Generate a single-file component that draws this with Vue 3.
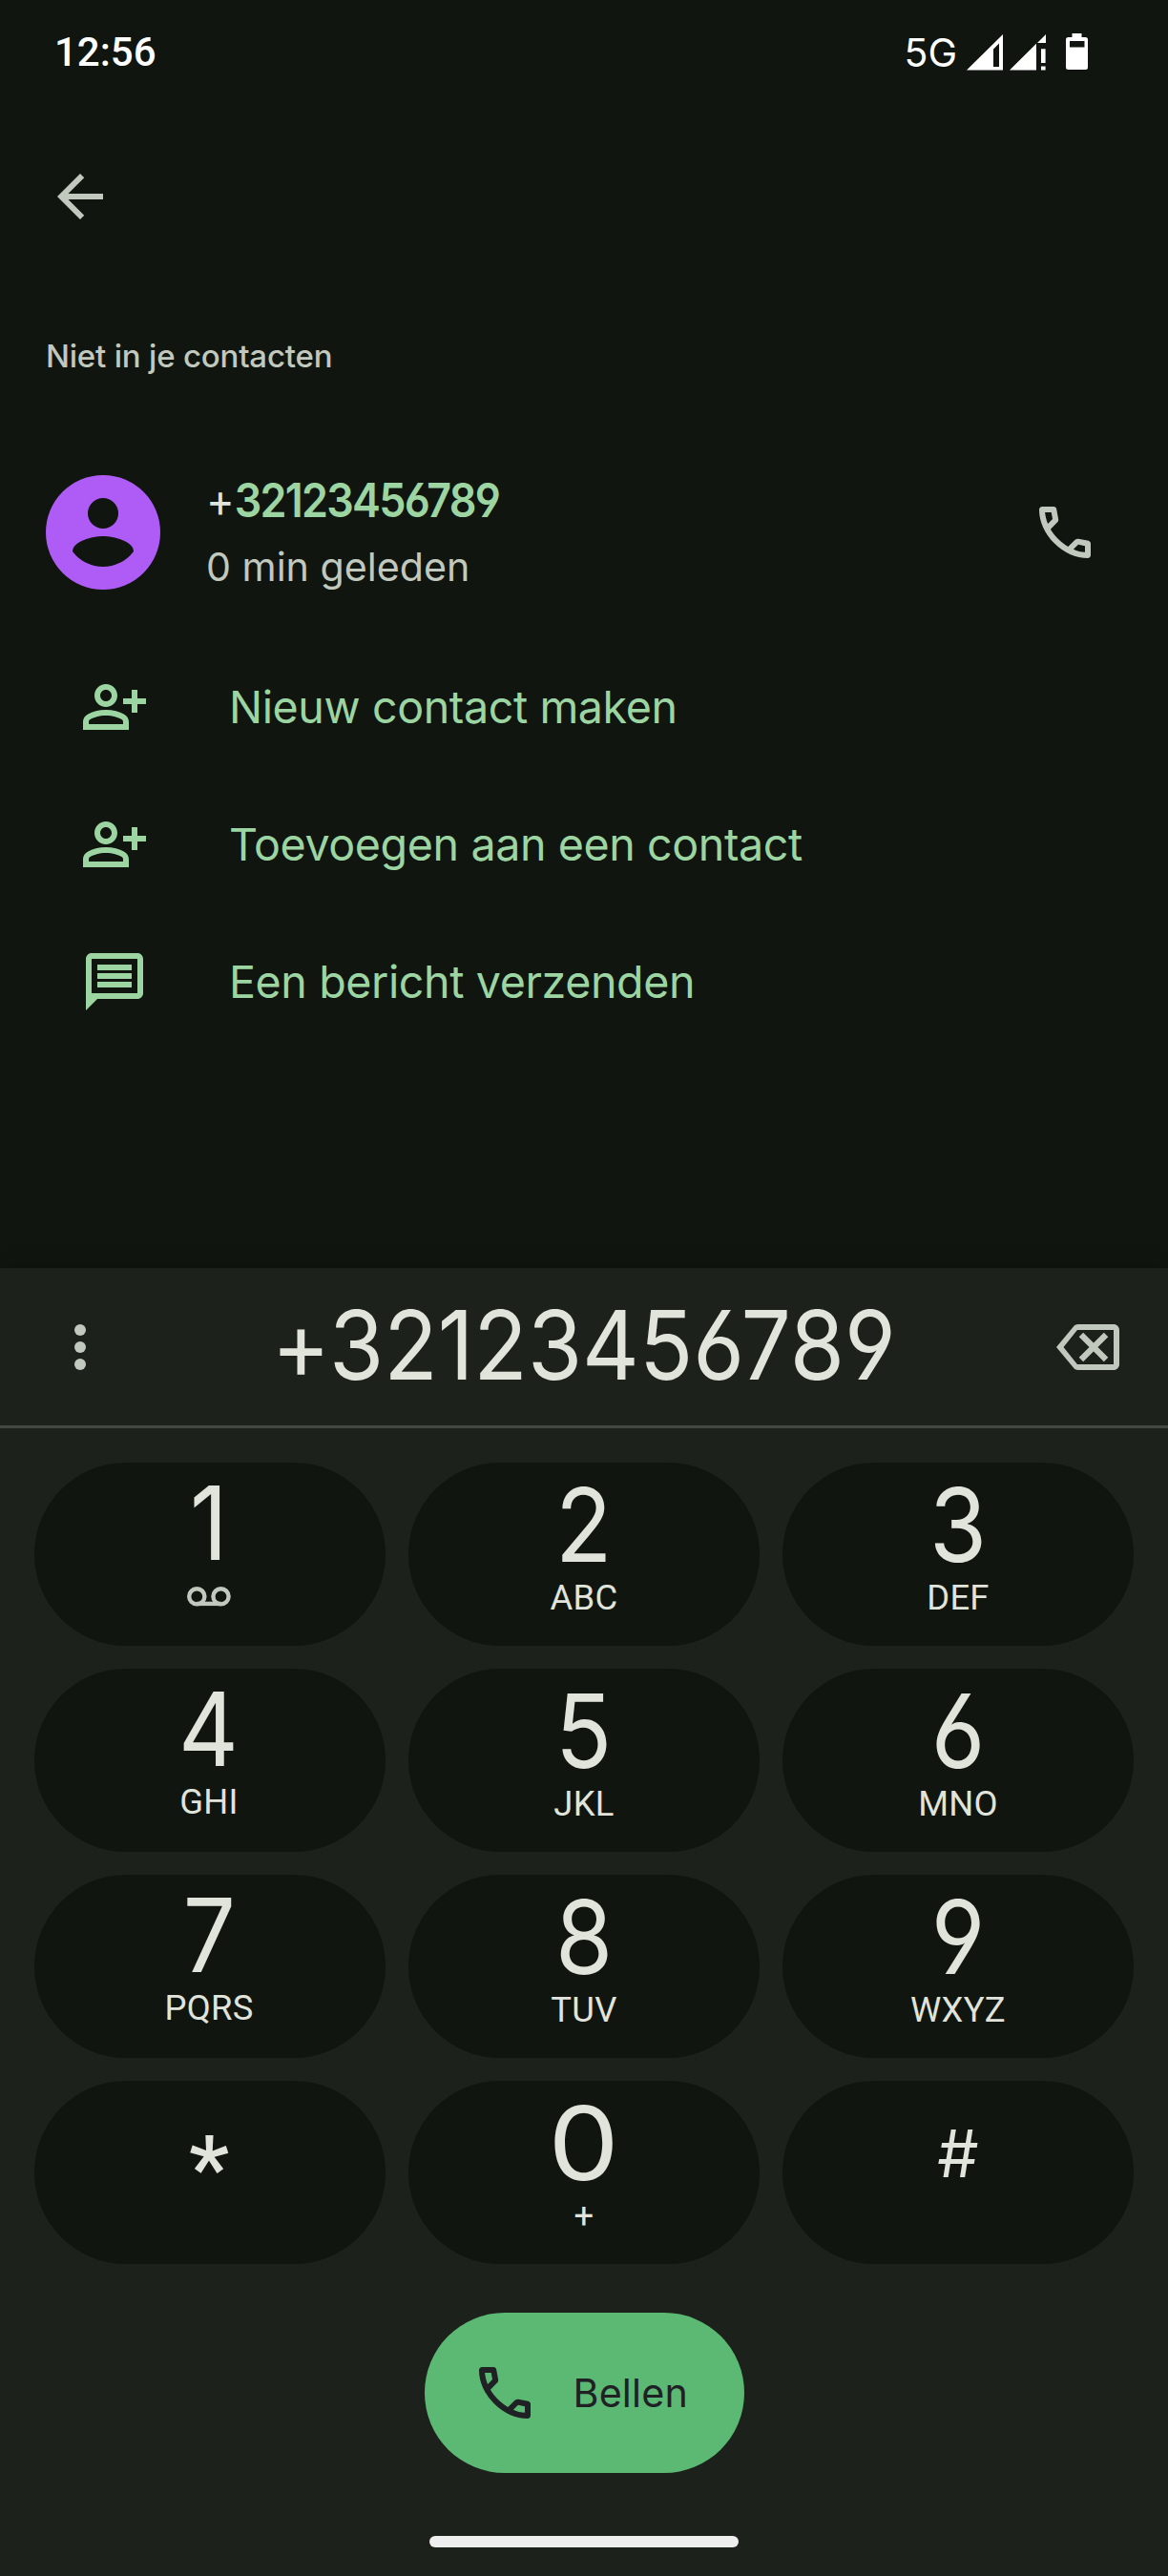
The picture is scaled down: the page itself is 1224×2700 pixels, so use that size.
<script setup>
const number = '32123456789'

const actions = [
  { icon: 'person', label: 'Nieuw contact maken' },
  { icon: 'person', label: 'Toevoegen aan een contact' },
  { icon: 'message', label: 'Een bericht verzenden' },
]

const keys = [
  { main: '1', voicemail: true },
  { main: '2', sub: 'ABC' },
  { main: '3', sub: 'DEF' },
  { main: '4', sub: 'GHI' },
  { main: '5', sub: 'JKL' },
  { main: '6', sub: 'MNO' },
  { main: '7', sub: 'PQRS' },
  { main: '8', sub: 'TUV' },
  { main: '9', sub: 'WXYZ' },
  { main: '*', kind: 'star' },
  { main: '0', sub: '+', kind: 'zero' },
  { main: '#', kind: 'hash' },
]

const callPath =
  'M798-120q-125 0-247-54.5T329-329Q229-429 174.5-551T120-798q0-18 12-30t30-12h162q14 0 25 9.5t13 22.5l26 140q2 16-1 27t-11 19l-97 98q20 37 47.5 71.5T387-386q31 31 65 57.5t72 48.5l94-94q9-9 23.5-13.5T670-390l138 28q14 4 23 14.5t9 23.5v162q0 18-12 30t-30 12ZM241-600l66-66-17-94h-89q5 41 14 81t26 79Zm358 358q39 17 79.5 27t81.5 13v-88l-94-19-67 67Z'
</script>

<template>
  <div class="screen">
    <header class="status">
      <span class="time">12:56</span>
      <div class="status-icons">
        <span class="network">5G</span>
        <svg class="signal" width="38" height="38" viewBox="0 0 38 38">
          <path fill-rule="evenodd" d="M0 37.5 38 0V37.5ZM28 15.5V34H34V9.5Z" />
        </svg>
        <svg class="signal" width="38" height="38" viewBox="0 0 38 38">
          <path d="M0 37.5 28 9.8V37.5ZM29 9 38 0V9ZM33 15.2h4.6V30H33ZM33 33.5h4.6v4H33Z" />
        </svg>
        <svg class="battery" width="23" height="38" viewBox="0 0 23 38">
          <path
            fill-rule="evenodd"
            d="M6.5 0h10v4H20.5a2.5 2.5 0 0 1 2.5 2.5V35.5a2.5 2.5 0 0 1-2.5 2.5H2.5A2.5 2.5 0 0 1 0 35.5V6.5A2.5 2.5 0 0 1 2.5 4h4ZM4 8v6.5h15.5V8Z"
          />
        </svg>
      </div>
    </header>

    <div class="toolbar">
      <svg class="icon" viewBox="0 0 24 24">
        <path d="M20 11H7.83l5.59-5.59L12 4l-8 8 8 8 1.410-1.410L7.83 13H20v-2z" />
      </svg>
    </div>

    <h2 class="section-title">Niet in je contacten</h2>

    <div class="contact">
      <svg class="avatar" viewBox="0 0 120 120">
        <circle class="avatar-bg" cx="60" cy="60" r="60" />
        <circle class="avatar-fg" cx="60" cy="40" r="16" />
        <path class="avatar-fg" d="M28 80C28 69.4 49.3 64 60 64S92 69.4 92 80A40 40 0 0 1 28 80Z" />
      </svg>
      <div class="contact-text">
        <div class="contact-number">+<b>{{ number }}</b></div>
        <div class="contact-time">0 min geleden</div>
      </div>
      <svg class="icon" viewBox="0 -960 960 960"><path :d="callPath" /></svg>
    </div>

    <ul class="actions">
      <li v-for="action in actions" :key="action.label" class="action">
        <svg v-if="action.icon === 'person'" class="icon" viewBox="0 0 24 24">
          <path
            d="M20 9V6h-2v3h-3v2h3v3h2v-3h3V9h-3zM9 12c2.21 0 4-1.79 4-4s-1.79-4-4-4-4 1.79-4 4 1.79 4 4 4zm0-6c1.1 0 2 .9 2 2s-.9 2-2 2-2-.9-2-2 .9-2 2-2zM15.39 14.56C13.71 13.7 11.53 13 9 13s-4.71.7-6.39 1.56C1.61 15.07 1 16.1 1 17.22V20h16v-2.78c0-1.12-.61-2.15-1.61-2.66zM15 18H3v-.78c0-.38.2-.72.52-.88C4.71 15.73 6.63 15 9 15c2.37 0 4.29.73 5.48 1.34.32.16.52.5.52.88V18z"
          />
        </svg>
        <svg v-else class="icon" viewBox="0 0 24 24">
          <path
            fill-rule="evenodd"
            d="M4 2h16c1.1 0 2 .9 2 2v12c0 1.1-.9 2-2 2H6l-4 4V4c0-1.1.9-2 2-2zM4 4v12h16V4zM6 6h12v2H6zM6 9h12v2H6zM6 12h12v2H6z"
          />
        </svg>
        <span>{{ action.label }}</span>
      </li>
    </ul>

    <section class="panel">
      <div class="display">
        <svg class="icon" viewBox="0 0 24 24">
          <circle cx="12" cy="6" r="2" />
          <circle cx="12" cy="12" r="2" />
          <circle cx="12" cy="18" r="2" />
        </svg>
        <span class="dialed">+{{ number }}</span>
        <svg class="icon" viewBox="0 0 24 24">
          <path
            fill-rule="evenodd"
            d="M8.6 4H21c1.1 0 2 .9 2 2v12c0 1.1-.9 2-2 2H8.6c-.7 0-1.3-.3-1.7-.9L1 12l5.9-7.1c.4-.6 1-.9 1.7-.9zM8.3 6 3.5 12l4.8 6H21V6z"
          />
          <path class="cross" d="M9.65 7.65l8.7 8.7M18.35 7.65l-8.7 8.7" />
        </svg>
      </div>

      <div class="keypad">
        <button v-for="key in keys" :key="key.main" class="key" type="button">
          <span class="main" :class="key.kind">{{ key.main }}</span>
          <svg v-if="key.voicemail" class="voicemail" width="46" height="21" viewBox="0 0 46 21">
            <circle cx="10.3" cy="10.3" r="8.1" />
            <circle cx="35.5" cy="10.3" r="8.1" />
            <path d="M10.3 17.9H35.5" />
          </svg>
          <span v-else-if="key.sub" class="sub">{{ key.sub }}</span>
        </button>
      </div>

      <button class="call" type="button">
        <svg class="icon" viewBox="0 -960 960 960"><path :d="callPath" /></svg>
        <span>Bellen</span>
      </button>

      <div class="home-bar"></div>
    </section>
  </div>
</template>

<style>
body {
  margin: 0;
  background: #10150f;
}
</style>

<style scoped>
.screen {
  display: flex;
  flex-direction: column;
  width: 1224px;
  height: 2700px;
  overflow: hidden;
  background: #10150f;
  color: #c1c9be;
  font-family: Inter, Roboto, sans-serif;
  font-feature-settings: "cv03", "cv04", "calt" 0;
}

.icon {
  display: block;
  flex: none;
  width: 72px;
  height: 72px;
  fill: currentColor;
}

.status {
  display: flex;
  align-items: center;
  justify-content: space-between;
  height: 110px;
  padding: 0 84px 0 57px;
  color: #fff;
}

.time {
  font: 500 42px/50px Roboto, sans-serif;
}

.status-icons {
  display: flex;
  align-items: center;
}

.status-icons svg {
  display: block;
  fill: #fff;
}

.network {
  font-size: 41px;
  line-height: 50px;
  margin-right: 10px;
}

.signal {
  margin-right: 7px;
}

.battery {
  margin: -2px 0 0 14px;
}

.toolbar {
  display: flex;
  align-items: center;
  height: 192px;
  padding-left: 48px;
}

.section-title {
  margin: 0 0 3px;
  padding-left: 48px;
  font-size: 33px;
  font-weight: 500;
  line-height: 142px;
  letter-spacing: -0.2px;
}

.contact {
  display: flex;
  align-items: center;
  height: 222px;
  padding: 0 72px 0 48px;
}

.avatar {
  display: block;
  width: 120px;
  height: 120px;
  margin-right: 48px;
}

.avatar-bg {
  fill: #af5cf7;
}

.avatar-fg {
  fill: #10150f;
}

.contact-text {
  flex: 1;
  padding-top: 2px;
  line-height: 70px;
}

.contact-number {
  width: max-content;
  color: #e0e4db;
  font-size: 49.3px;
  transform: scaleX(0.91);
  transform-origin: left;
}

.contact-number b {
  color: #9cd5a2;
  font-weight: 600;
  letter-spacing: -1.9px;
}

.contact-time {
  font-size: 41.2px;
}

.actions {
  margin: 0;
  padding: 0;
  list-style: none;
}

.action {
  display: flex;
  align-items: center;
  gap: 84px;
  height: 144px;
  padding-left: 84px;
  color: #9cd5a2;
  font-size: 46.6px;
  letter-spacing: -0.4px;
}

.panel {
  display: flex;
  flex-direction: column;
  align-items: center;
  height: 1371px;
  margin-top: auto;
  background: #1d211b;
  box-shadow: 0 0 24px rgba(0, 0, 0, 0.18);
}

.display {
  display: flex;
  align-items: center;
  justify-content: space-between;
  box-sizing: border-box;
  width: 100%;
  height: 168px;
  padding: 0 48px;
  border-bottom: 3px solid #414941;
}

.dialed {
  margin-top: -4px;
  color: #e0e4db;
  font-size: 100.5px;
  line-height: 120px;
  transform: scaleX(0.922);
}

.cross {
  fill: none;
  stroke: currentColor;
  stroke-width: 2.1;
}

.keypad {
  display: grid;
  grid-template-columns: repeat(3, 368px);
  grid-auto-rows: 192px;
  gap: 24px;
  margin-top: 36px;
}

.key {
  display: flex;
  flex-direction: column;
  align-items: center;
  padding: 0;
  border: 0;
  border-radius: 96px;
  background: #10150f;
  color: #e0e4db;
  font: inherit;
}

.key:nth-child(3n + 1) {
  padding: 0 2px 2px 0;
}

.main {
  font-size: 107px;
  line-height: 130px;
  transform: scaleX(0.91);
}

.key:nth-child(3n + 1) .main:not(.star) {
  line-height: 126px;
  margin-bottom: 2px;
}

.main.zero {
  transform: scaleX(1.1);
}

.main.hash {
  font-size: 68.5px;
  line-height: 154px;
  transform: none;
}

.main.star {
  font-family: Roboto, sans-serif;
  font-size: 95px;
  font-weight: 500;
  line-height: 183px;
  transform: none;
}

.sub {
  font-family: Roboto, sans-serif;
  font-size: 36.4px;
  line-height: 24px;
  letter-spacing: 0.3px;
}

.voicemail {
  display: block;
  margin-top: 2px;
  fill: none;
  stroke: #c1c9be;
  stroke-width: 4.4;
}

.call {
  display: flex;
  align-items: center;
  gap: 36px;
  box-sizing: border-box;
  width: 335px;
  height: 168px;
  margin: 51px 0 66px;
  padding: 0 0 0 48px;
  border: 0;
  border-radius: 84px;
  background: #5bb974;
  color: #202124;
  font: inherit;
  font-size: 41.2px;
  letter-spacing: 0.2px;
}

.home-bar {
  width: 324px;
  height: 12px;
  border-radius: 6px;
  background: #eee;
}
</style>
